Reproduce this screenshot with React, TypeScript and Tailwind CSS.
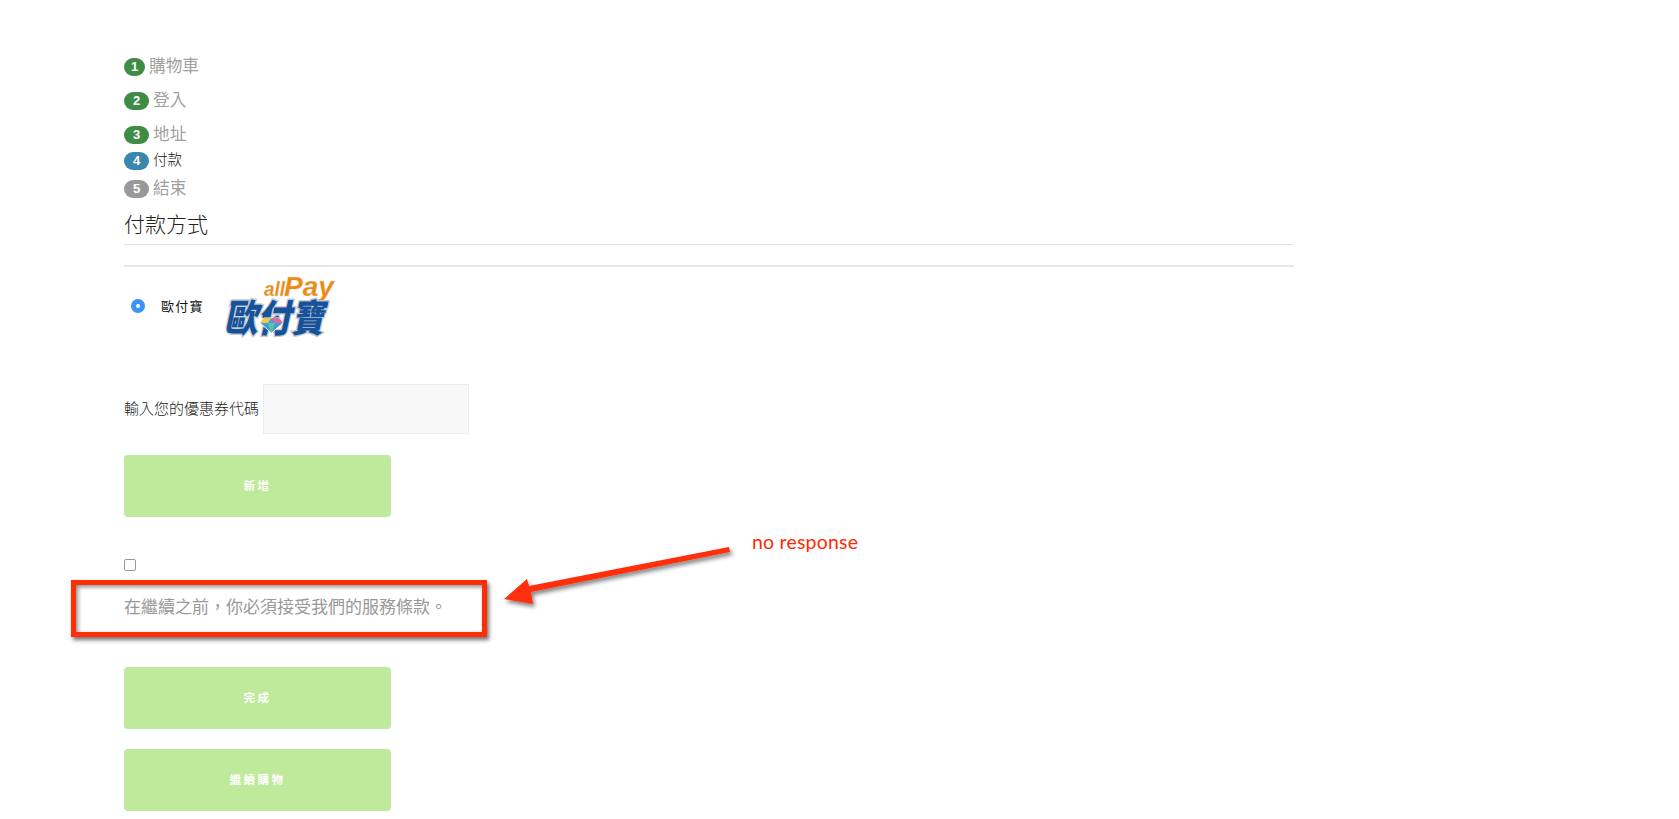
const font = `font-['Noto_Sans_CJK_TC','Liberation_Sans',sans-serif]`

const steps = [
    { n: 1, label: "購物車", badge: "w-[21px] bg-[#408c47]", text: "ml-[4px] text-[16.7px] text-[#a0a0a0]", mt: "mt-[58px]" },
    { n: 2, label: "登入", badge: "w-[25px] bg-[#408c47]", text: "ml-[4px] text-[16.7px] text-[#a0a0a0]", mt: "mt-[16px]" },
    { n: 3, label: "地址", badge: "w-[25px] bg-[#408c47]", text: "ml-[4px] text-[16.7px] text-[#a0a0a0]", mt: "mt-[16px]" },
    { n: 4, label: "付款", badge: "w-[25px] bg-[#3a87ad]", text: "ml-[4px] text-[14.5px] font-light text-[#111]", mt: "mt-[8px]" },
    { n: 5, label: "結束", badge: "w-[25px] bg-[#999999]", text: "ml-[4px] text-[16.7px] text-[#a0a0a0]", mt: "mt-[10px]" },
]

const AllPayLogo = () => (
    <svg width="124" height="84" viewBox="0 0 124 84" className="ml-[14px] mt-[14px]">
        {/* allPay */}
        <g fontFamily="'Liberation Sans', sans-serif" fontStyle="italic" fontWeight="700" fill="#ee8a0c" stroke="#d9d9d9" strokeWidth="0.3">
            <text x="46" y="25" fontSize="21" textLength="21" lengthAdjust="spacingAndGlyphs">all</text>
            <text x="66" y="25" fontSize="27" textLength="50" lengthAdjust="spacingAndGlyphs">Pay</text>
        </g>
        {/* chinese name, white halo first */}
        <g fontFamily="'Noto Sans CJK TC', sans-serif" fontWeight="900" fontSize="38" transform="translate(16 0) skewX(-12)">
            <text x="3" y="61" fill="#fff" stroke="#c8ccd2" strokeWidth="3" textLength="100" lengthAdjust="spacingAndGlyphs">歐付寶</text>
            <text x="3" y="61" fill="#14539a" textLength="100" lengthAdjust="spacingAndGlyphs">歐付寶</text>
        </g>
        {/* gem */}
        <polygon points="46,47 61,47 65,52 53.5,62 42,52" fill="#3f9fd8" stroke="#fff" strokeWidth="1" />
        <polygon points="46,47 53,47 50,52 42,52" fill="#f2c84b" />
        <polygon points="53,47 61,47 65,52 57,52" fill="#e56a9c" />
        <polygon points="50,52 57,52 53.5,62" fill="#5cc3a5" />
    </svg>
)

const GreenButton = ({ label, mt }: { label: string, mt: string }) => {
    return (
        <button className={`block w-[267px] h-[62px] rounded-[4px] bg-[#bfe99b] text-white text-[11.5px] font-bold tracking-[2.5px] ${mt}`}>
            {label}
        </button>
    )
}

const App = () => {
    return (
        <div className={`relative h-[819px] overflow-hidden bg-white pl-[124px] ${font}`}>
            {/* Steps */}
            {steps.map((s) => (
                <div key={s.n} className={`flex h-[18px] items-center ${s.mt}`}>
                    <span className={`flex h-[18px] items-center justify-center rounded-full font-['Liberation_Sans',sans-serif] text-[13px] font-bold text-white ${s.badge}`}>
                        {s.n}
                    </span>
                    <span className={`relative top-[-2px] leading-none ${s.text}`}>{s.label}</span>
                </div>
            ))}

            <div className="w-[1170px]">
                <h3 className="mt-[12px] h-[34px] text-[21px] font-light leading-[26px] text-[#222]">付款方式</h3>
                <hr className="border-t border-[#e2e2e2]" />
                <hr className="mt-[20px] border-t-2 border-[#e8e8e8]" />

                {/* Payment method */}
                <div className="mt-[6px] flex h-[66px] items-center">
                    <span className="ml-[7px] flex h-[14px] w-[14px] items-center justify-center rounded-full bg-[#3b93f7]">
                        <span className="h-[4px] w-[4px] rounded-full bg-white" />
                    </span>
                    <span className="ml-[16px] text-[13px] tracking-[1.3px] text-[#111]">歐付寶</span>
                    <AllPayLogo />
                </div>

                {/* Coupon */}
                <div className="mt-[45px] flex items-center">
                    <label className="relative top-[-1px] text-[15px] font-light text-[#222]">輸入您的優惠券代碼</label>
                    <input className="ml-[4px] h-[50px] w-[206px] border border-[#eeeeee] bg-[#f8f8f8]" />
                </div>
                <GreenButton label="新增" mt="mt-[21px]" />

                {/* Terms */}
                <input type="checkbox" className="mt-[42px] block h-[12px] w-[12px] appearance-none rounded-[2px] border border-[#999] bg-white" />
                <p className="mt-[23px] h-[24px] text-[17px] leading-[24px] text-[#999]">{"在繼續之前\uFF0C你必須接受我們的服務條款。"}</p>

                <GreenButton label="完成" mt="mt-[49px]" />
                <GreenButton label="繼續購物" mt="mt-[20px]" />
            </div>

            {/* Screenshot annotation */}
            <div className="absolute left-[71px] top-[580px] h-[57px] w-[416px] border-[5px] border-[#ff2d08] shadow-[2px_3px_4px_rgba(0,0,0,0.55),inset_2px_2px_4px_rgba(0,0,0,0.45)]" />
            <svg className="absolute left-[495px] top-[535px]" width="250" height="75" viewBox="0 0 250 75">
                <defs>
                    <filter id="arrowShadow" x="-10%" y="-30%" width="120%" height="170%">
                        <feDropShadow dx="2" dy="3" stdDeviation="2" floodColor="#000" floodOpacity="0.5" />
                    </filter>
                </defs>
                <path d="M234 12 L235 17 L36 57 L38 69 L9 64 L32 44 L34 51 Z" fill="#ff2d08" filter="url(#arrowShadow)" />
            </svg>
            <span className="absolute left-[752px] top-[530px] font-['Lato',sans-serif] text-[19.5px] font-normal leading-[24px] tracking-[0.2px] text-[#ff2a00]">no response</span>
        </div>
    )
}

export default App
